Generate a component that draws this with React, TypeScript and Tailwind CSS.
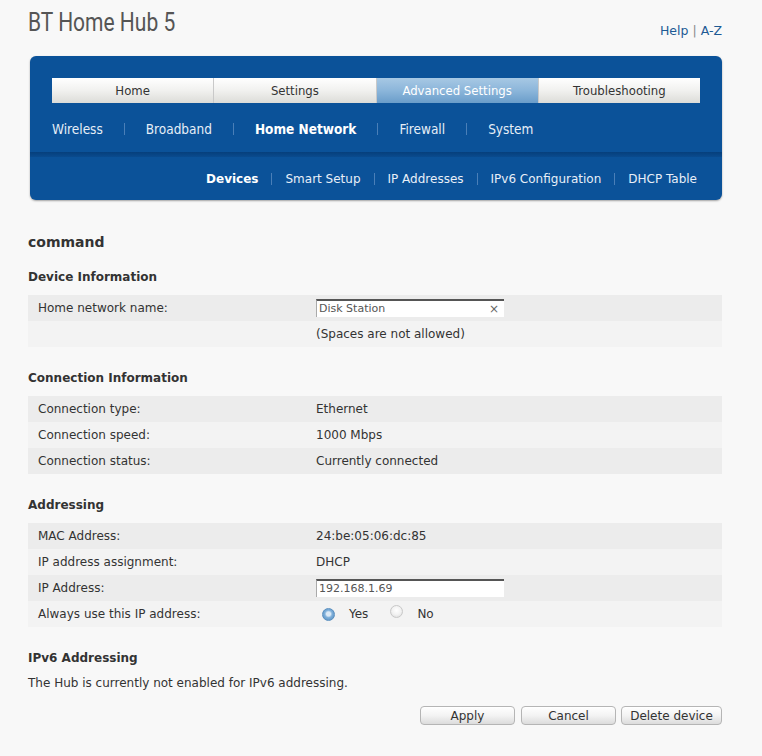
import React from 'react';

const titleFont = { fontFamily: 'Roboto, "DejaVu Sans Condensed", sans-serif' };
const nav = { fontFamily: '"DejaVu Sans Condensed", "DejaVu Sans", sans-serif' };
const body = { fontFamily: '"DejaVu Sans", Verdana, sans-serif' };

const tabs = ['Home', 'Settings', 'Advanced Settings', 'Troubleshooting'];
const sections = ['Wireless', 'Broadband', 'Home Network', 'Firewall', 'System'];
const pages = ['Devices', 'Smart Setup', 'IP Addresses', 'IPv6 Configuration', 'DHCP Table'];

function Row({ label, dark, children }: { label: string; dark: boolean; children?: React.ReactNode }) {
  return (
    <div className={`flex h-[26px] items-center ${dark ? 'bg-[#ececec]' : 'bg-[#f3f3f3]'}`}>
      <div className="w-[288px] pl-[10px]">{label}</div>
      <div className="flex items-center">{children}</div>
    </div>
  );
}

function Heading({ children }: { children: React.ReactNode }) {
  return <h3 className="font-bold text-[12px] text-[#333] h-[18px] leading-[18px] mb-[9px]">{children}</h3>;
}

function Field({ value, clear }: { value: string; clear?: boolean }) {
  return (
    <div className="relative w-[188px] h-[18px] bg-white border-t-2 border-t-[#555] border-l border-l-[#aaa] flex items-center pl-[2px] text-[11px] text-[#555]">
      {value}
      {clear && <span className="absolute right-[5px] top-[-1px] text-[12px] text-[#666]">×</span>}
    </div>
  );
}

function Radio({ on }: { on: boolean }) {
  return (
    <span
      className={`inline-block w-[13px] h-[13px] rounded-full border ${
        on
          ? 'border-[#5a8fbf] bg-[radial-gradient(circle_at_50%_45%,#dbe9f6_0,#dbe9f6_25%,#7fb0da_45%,#4f88bd_100%)]'
          : 'border-[#c8c8c8] bg-[radial-gradient(circle_at_50%_40%,#ffffff_0,#f2f2f2_50%,#d8d8d8_100%)]'
      }`}
    />
  );
}

function Button({ label, w }: { label: string; w: string }) {
  return (
    <button
      className={`${w} h-[19px] rounded-[4px] border border-[#b5b5b5] bg-gradient-to-b from-[#ffffff] via-[#f3f3f3] to-[#dcdcdc] text-[12px] leading-none text-[#333] shadow-[inset_0_1px_0_#fff]`}
    >
      {label}
    </button>
  );
}

export default function App() {
  return (
    <div className="min-h-screen bg-[#f8f8f8] text-[#333] text-[12px] pl-[28px] pr-[40px]" style={body}>
      {/* page header */}
      <div className="flex justify-between h-[56px]">
        <h1
          className="text-[25px] text-[#555] pt-[8px] leading-[30px] origin-left scale-x-[0.84] whitespace-nowrap"
          style={titleFont}
        >
          BT Home Hub 5
        </h1>
        <div className="pt-[22px] text-[12.5px] text-[#1d5a94]" style={{ fontFamily: '"DejaVu Sans", sans-serif' }}>
          Help <span className="text-[#888]">|</span> A-Z
        </div>
      </div>

      {/* navigation panel */}
      <div className="ml-[2px] rounded-[6px] bg-[#0b5299] shadow-[0_1px_2px_rgba(0,0,0,0.35)] overflow-hidden">
        <div className="px-[22px] pt-[22px] h-[96px]">
          <div className="flex h-[25px]" style={nav}>
            {tabs.map((t, i) => (
              <div
                key={t}
                className={`flex-1 flex items-center justify-center text-[13px] ${i > 0 ? 'border-l border-l-[#c9c9c9]' : ''} ${
                  t === 'Advanced Settings'
                    ? 'bg-gradient-to-b from-[#a7c8e4] via-[#8cb6da] to-[#6a9dca] text-white'
                    : 'bg-gradient-to-b from-[#ffffff] via-[#f1f1ef] to-[#dcdcd8] text-[#333]'
                }`}
              >
                {t}
              </div>
            ))}
          </div>
          <div className="flex items-center h-[24px] mt-[14px] text-[13.5px] text-[#e6eef7]" style={nav}>
            {sections.map((s, i) => (
              <React.Fragment key={s}>
                {i > 0 && <span className="mx-[21px] h-[12px] w-px bg-[#4a7fb8]" />}
                <span className={s === 'Home Network' ? 'font-bold text-white' : ''}>{s}</span>
              </React.Fragment>
            ))}
          </div>
        </div>
        <div className="h-[5px] bg-gradient-to-b from-[#063f7c] to-[#0a4b8e]" />
        <div className="flex items-center justify-end h-[43px] pr-[25px] text-[12px] text-[#e8eff8]">
          {pages.map((p, i) => (
            <React.Fragment key={p}>
              {i > 0 && <span className="mx-[13px] h-[12px] w-px bg-[#4a7fb8]" />}
              <span className={p === 'Devices' ? 'font-bold text-white' : ''}>{p}</span>
            </React.Fragment>
          ))}
        </div>
      </div>

      {/* device page */}
      <h2 className="mt-[33px] font-bold text-[14px] leading-[18px] text-[#333] mb-[17px]">command</h2>

      <Heading>Device Information</Heading>
      <Row label="Home network name:" dark>
        <Field value="Disk Station" clear />
      </Row>
      <Row label="" dark={false}>(Spaces are not allowed)</Row>

      <div className="mt-[22px]" />
      <Heading>Connection Information</Heading>
      <Row label="Connection type:" dark>Ethernet</Row>
      <Row label="Connection speed:" dark={false}>1000 Mbps</Row>
      <Row label="Connection status:" dark>Currently connected</Row>

      <div className="mt-[22px]" />
      <Heading>Addressing</Heading>
      <Row label="MAC Address:" dark>24:be:05:06:dc:85</Row>
      <Row label="IP address assignment:" dark={false}>DHCP</Row>
      <Row label="IP Address:" dark>
        <Field value="192.168.1.69" />
      </Row>
      <Row label="Always use this IP address:" dark={false}>
        <span className="ml-[6px] flex items-center">
          <Radio on />
          <span className="ml-[14px]">Yes</span>
          <span className="ml-[22px]"><Radio on={false} /></span>
          <span className="ml-[14px]">No</span>
        </span>
      </Row>

      <div className="mt-[22px]" />
      <Heading>IPv6 Addressing</Heading>
      <p className="leading-[14px]">The Hub is currently not enabled for IPv6 addressing.</p>

      <div className="flex justify-end gap-[5px] mt-[16px] pb-[30px]">
        <span className="mr-[1px]"><Button label="Apply" w="w-[95px]" /></span>
        <Button label="Cancel" w="w-[95px]" />
        <Button label="Delete device" w="w-[101px]" />
      </div>
    </div>
  );
}
